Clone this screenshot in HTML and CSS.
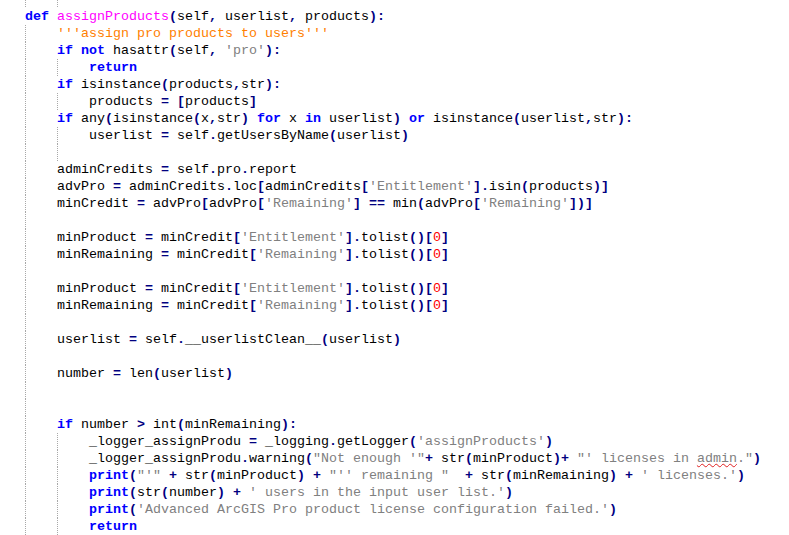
FILE: index.html
```html
<!DOCTYPE html>
<html>
<head>
<meta charset="utf-8">
<link rel="stylesheet" href="styles.css">
</head>
<body>
<div class="editor">
<div class="ln partial"><span class="g"></span><span class="g"></span></div>
<div class="ln"><span class="k">def</span> <span class="fn">assignProducts</span><span class="o">(</span>self<span class="o">,</span> userlist<span class="o">,</span> products<span class="o">):</span></div>
<div class="ln"><span class="g"></span><span class="t">'''assign pro products to users'''</span></div>
<div class="ln"><span class="g"></span><span class="k">if</span> <span class="k">not</span> hasattr<span class="o">(</span>self<span class="o">,</span> <span class="s">'pro'</span><span class="o">):</span></div>
<div class="ln"><span class="g"></span><span class="g"></span><span class="k">return</span></div>
<div class="ln"><span class="g"></span><span class="k">if</span> isinstance<span class="o">(</span>products<span class="o">,</span>str<span class="o">):</span></div>
<div class="ln"><span class="g"></span><span class="g"></span>products <span class="o">=</span> <span class="o">[</span>products<span class="o">]</span></div>
<div class="ln"><span class="g"></span><span class="k">if</span> any<span class="o">(</span>isinstance<span class="o">(</span>x<span class="o">,</span>str<span class="o">)</span> <span class="k">for</span> x <span class="k">in</span> userlist<span class="o">)</span> <span class="k">or</span> isinstance<span class="o">(</span>userlist<span class="o">,</span>str<span class="o">):</span></div>
<div class="ln"><span class="g"></span><span class="g"></span>userlist <span class="o">=</span> self<span class="o">.</span>getUsersByName<span class="o">(</span>userlist<span class="o">)</span></div>
<div class="ln"><span class="g"></span><span class="g"></span></div>
<div class="ln"><span class="g"></span>adminCredits <span class="o">=</span> self<span class="o">.</span>pro<span class="o">.</span>report</div>
<div class="ln"><span class="g"></span>advPro <span class="o">=</span> adminCredits<span class="o">.</span>loc<span class="o">[</span>adminCredits<span class="o">[</span><span class="s">'Entitlement'</span><span class="o">].</span>isin<span class="o">(</span>products<span class="o">)]</span></div>
<div class="ln"><span class="g"></span>minCredit <span class="o">=</span> advPro<span class="o">[</span>advPro<span class="o">[</span><span class="s">'Remaining'</span><span class="o">]</span> <span class="o">==</span> min<span class="o">(</span>advPro<span class="o">[</span><span class="s">'Remaining'</span><span class="o">])]</span></div>
<div class="ln"><span class="g"></span></div>
<div class="ln"><span class="g"></span>minProduct <span class="o">=</span> minCredit<span class="o">[</span><span class="s">'Entitlement'</span><span class="o">].</span>tolist<span class="o">()[</span><span class="n">0</span><span class="o">]</span></div>
<div class="ln"><span class="g"></span>minRemaining <span class="o">=</span> minCredit<span class="o">[</span><span class="s">'Remaining'</span><span class="o">].</span>tolist<span class="o">()[</span><span class="n">0</span><span class="o">]</span></div>
<div class="ln"><span class="g"></span></div>
<div class="ln"><span class="g"></span>minProduct <span class="o">=</span> minCredit<span class="o">[</span><span class="s">'Entitlement'</span><span class="o">].</span>tolist<span class="o">()[</span><span class="n">0</span><span class="o">]</span></div>
<div class="ln"><span class="g"></span>minRemaining <span class="o">=</span> minCredit<span class="o">[</span><span class="s">'Remaining'</span><span class="o">].</span>tolist<span class="o">()[</span><span class="n">0</span><span class="o">]</span></div>
<div class="ln"><span class="g"></span></div>
<div class="ln"><span class="g"></span>userlist <span class="o">=</span> self<span class="o">.</span>__userlistClean__<span class="o">(</span>userlist<span class="o">)</span></div>
<div class="ln"><span class="g"></span></div>
<div class="ln"><span class="g"></span>number <span class="o">=</span> len<span class="o">(</span>userlist<span class="o">)</span></div>
<div class="ln"><span class="g"></span></div>
<div class="ln"><span class="g"></span></div>
<div class="ln"><span class="g"></span><span class="k">if</span> number <span class="o">&gt;</span> int<span class="o">(</span>minRemaining<span class="o">):</span></div>
<div class="ln"><span class="g"></span><span class="g"></span>_logger_assignProdu <span class="o">=</span> _logging<span class="o">.</span>getLogger<span class="o">(</span><span class="s">'assignProducts'</span><span class="o">)</span></div>
<div class="ln"><span class="g"></span><span class="g"></span>_logger_assignProdu<span class="o">.</span>warning<span class="o">(</span><span class="s">"Not enough '"</span><span class="o">+</span> str<span class="o">(</span>minProduct<span class="o">)+</span> <span class="s">"' licenses in <span class="sp">admin</span>."</span><span class="o">)</span></div>
<div class="ln"><span class="g"></span><span class="g"></span><span class="k">print</span><span class="o">(</span><span class="s">"'"</span> <span class="o">+</span> str<span class="o">(</span>minProduct<span class="o">)</span> <span class="o">+</span> <span class="s">"'' remaining "</span>  <span class="o">+</span> str<span class="o">(</span>minRemaining<span class="o">)</span> <span class="o">+</span> <span class="s">' licenses.'</span><span class="o">)</span></div>
<div class="ln"><span class="g"></span><span class="g"></span><span class="k">print</span><span class="o">(</span>str<span class="o">(</span>number<span class="o">)</span> <span class="o">+</span> <span class="s">' users in the input user list.'</span><span class="o">)</span></div>
<div class="ln"><span class="g"></span><span class="g"></span><span class="k">print</span><span class="o">(</span><span class="s">'Advanced ArcGIS Pro product license configuration failed.'</span><span class="o">)</span></div>
<div class="ln"><span class="g"></span><span class="g"></span><span class="k">return</span></div>
</div>
</body>
</html>
```
FILE: styles.css
```css
html, body {
  margin: 0;
  padding: 0;
  background: #ffffff;
}

.editor {
  padding-left: 25px;
  height: 535px;
  overflow: hidden;
  font-family: "Liberation Mono", "Courier New", monospace;
  font-size: 13.33px;
  color: #000000;
}

.ln {
  height: 17px;
  line-height: 17px;
  white-space: pre;
}

.ln.partial {
  height: 8px;
  overflow: hidden;
}

.g {
  display: inline-block;
  box-sizing: border-box;
  width: 32px;
  height: 17px;
  vertical-align: top;
  border-left: 1px dotted #a8a8a8;
}

.k {
  color: #0000ff;
  font-weight: bold;
}

.fn {
  color: #ff00ff;
}

.o {
  color: #000080;
  font-weight: bold;
}

.s {
  color: #808080;
}

.t {
  color: #ff8000;
}

.n {
  color: #ff0000;
}

.sp {
  text-decoration: underline wavy #e02020;
  text-decoration-thickness: 1px;
  text-decoration-skip-ink: none;
  text-underline-offset: 1px;
}
```
